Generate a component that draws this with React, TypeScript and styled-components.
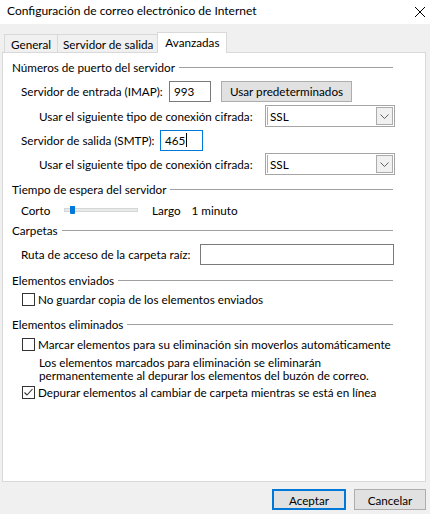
import React from "react";
import styled, { createGlobalStyle } from "styled-components";

const Global = createGlobalStyle`
  html, body { margin: 0; padding: 0; background: #f0f0f0; }
  body {
    font-family: "Segoe UI", Lato, "Noto Sans", sans-serif;
    font-size: 11.7px;
    color: #000;
  }
  * { box-sizing: border-box; }
`;

const Window = styled.div`
  width: 430px;
  height: 514px;
  background: #f0f0f0;
  display: flex;
  flex-direction: column;
  overflow: hidden;
`;

const TitleBar = styled.div`
  height: 24px;
  background: #fff;
  display: flex;
  align-items: center;
  justify-content: space-between;
  padding: 0 4px 0 7px;
`;

const Title = styled.span`
  font-size: 12px;
  line-height: 16px;
  margin-top: -3px;
`;

const TabStrip = styled.div`
  display: flex;
  align-items: flex-end;
  height: 21px;
  margin: 8px 0 0 4px;
  position: relative;
  z-index: 1;
`;

const Tab = styled.div<{ $active?: boolean; $pad: number }>`
  display: flex;
  align-items: center;
  white-space: nowrap;
  padding: 0 ${(p) => p.$pad}px;
  border: 1px solid #d9d9d9;
  border-bottom: none;
  margin-left: ${(p) => (p.$active ? -2 : -1)}px;
  height: ${(p) => (p.$active ? 21 : 18)}px;
  margin-bottom: ${(p) => (p.$active ? 0 : 1)}px;
  padding-bottom: ${(p) => (p.$active ? 2 : 0)}px;
  background: ${(p) => (p.$active ? "#fff" : "#f0f0f0")};
  &:first-child { margin-left: 0; }
`;

const Panel = styled.div`
  margin: -1px 0 0 2px;
  width: 424px;
  height: 430px;
  background: #fff;
  border: 1px solid #d9d9d9;
  padding: 6px 0 0 9px;
`;

const Column = styled.div`
  width: 382px;
  display: flex;
  flex-direction: column;
`;

const GroupHeader = styled.div<{ $mt: number }>`
  display: flex;
  align-items: center;
  height: 16px;
  margin-top: ${(p) => p.$mt}px;
  white-space: nowrap;
`;

const GroupLine = styled.div`
  flex: 1;
  height: 1px;
  background: #a0a0a0;
  margin: 1px 1px 0 4px;
`;

const Row = styled.div<{ $mt: number; $indent: number; $h?: number }>`
  display: flex;
  align-items: center;
  height: ${(p) => p.$h ?? 22}px;
  margin-top: ${(p) => p.$mt}px;
  padding-left: ${(p) => p.$indent}px;
  white-space: nowrap;
`;

const Label = styled.span<{ $w: number }>`
  width: ${(p) => p.$w}px;
  flex: none;
`;

const TextBox = styled.div<{ $w: number; $focused?: boolean }>`
  width: ${(p) => p.$w}px;
  height: 21px;
  border: 1px solid ${(p) => (p.$focused ? "#0078d7" : "#7a7a7a")};
  background: #fff;
  display: flex;
  align-items: center;
  padding-left: 4px;
  flex: none;
`;

const Caret = styled.span`
  display: inline-block;
  width: 1px;
  height: 14px;
  background: #000;
  margin-left: 1px;
`;

const PushButton = styled.div<{ $w: number; $default?: boolean; $ml?: number }>`
  width: ${(p) => p.$w}px;
  height: 21px;
  margin-left: ${(p) => p.$ml ?? 0}px;
  background: #e1e1e1;
  border: ${(p) => (p.$default ? "2px solid #0078d7" : "1px solid #adadad")};
  display: flex;
  align-items: center;
  justify-content: center;
  flex: none;
  white-space: nowrap;
`;

const Combo = styled.div`
  width: 130px;
  height: 22px;
  border: 1px solid #a5a5a5;
  background: #fff;
  display: flex;
  align-items: stretch;
  padding: 1px;
  flex: none;
`;

const ComboText = styled.div`
  flex: 1;
  display: flex;
  align-items: center;
  padding-left: 2px;
  border-left: 1px solid #99b4d1;
`;

const ComboButton = styled.div`
  width: 17px;
  border: 1px solid #acacac;
  background: #f0f0f0;
  display: flex;
  align-items: center;
  justify-content: center;
`;

const SliderTrack = styled.div`
  position: relative;
  width: 74px;
  height: 4px;
  background: #e7eaea;
  border: 1px solid #d6d6d6;
  flex: none;
`;

const SliderThumb = styled.div`
  position: absolute;
  left: 5px;
  top: -3px;
  width: 5px;
  height: 8px;
  background: #0078d7;
  border-radius: 0 0 1px 1px;
`;

const Gap = styled.span<{ $w: number }>`
  display: inline-block;
  width: ${(p) => p.$w}px;
  flex: none;
`;

const CheckBox = styled.div`
  width: 13px;
  height: 13px;
  border: 1px solid #333;
  background: #fff;
  flex: none;
  margin-right: 3px;
  display: flex;
  align-items: center;
  justify-content: center;
`;

const Description = styled.div`
  margin-top: 4px;
  padding-left: 27px;
  line-height: 13px;
  white-space: nowrap;
`;

const ButtonBar = styled.div`
  display: flex;
  justify-content: flex-end;
  gap: 8px;
  margin-top: 7px;
  padding-right: 4px;
`;

const Chevron = () => (
  <svg width="9" height="5" viewBox="0 0 9 5">
    <path d="M0.5 0.5 L4.5 4.5 L8.5 0.5" fill="none" stroke="#606060" strokeWidth="1" />
  </svg>
);

const CloseX = () => (
  <svg width="12" height="12" viewBox="0 0 12 12">
    <path d="M1 1 L11 11 M11 1 L1 11" stroke="#000" strokeWidth="1" />
  </svg>
);

const Check = () => (
  <svg width="11" height="11" viewBox="0 0 11 11">
    <path d="M1.5 5.5 L4 8 L9.5 2" fill="none" stroke="#333" strokeWidth="1.1" />
  </svg>
);

const ComboBox = ({ value }: { value: string }) => (
  <Combo>
    <ComboText>{value}</ComboText>
    <ComboButton>
      <Chevron />
    </ComboButton>
  </Combo>
);

const Group = ({ title, mt }: { title: string; mt: number }) => (
  <GroupHeader $mt={mt}>
    {title}
    <GroupLine />
  </GroupHeader>
);

export default function App() {
  return (
    <>
      <Global />
      <Window>
        <TitleBar>
          <Title>Configuración de correo electrónico de Internet</Title>
          <CloseX />
        </TitleBar>
        <TabStrip>
          <Tab $pad={6}>General</Tab>
          <Tab $pad={5}>Servidor de salida</Tab>
          <Tab $pad={7} $active>Avanzadas</Tab>
        </TabStrip>
        <Panel>
          <Column>
            <Group title="Números de puerto del servidor" mt={0} />
            <Row $mt={5} $indent={9}>
              <Label $w={148}>Servidor de entrada (IMAP):</Label>
              <TextBox $w={42}>993</TextBox>
              <PushButton $w={131} $ml={10}>Usar predeterminados</PushButton>
            </Row>
            <Row $mt={3} $indent={27}>
              <Label $w={226}>Usar el siguiente tipo de conexión cifrada:</Label>
              <ComboBox value="SSL" />
            </Row>
            <Row $mt={2} $indent={9}>
              <Label $w={139}>Servidor de salida (SMTP):</Label>
              <TextBox $w={43} $focused>
                465
                <Caret />
              </TextBox>
            </Row>
            <Row $mt={2} $indent={27}>
              <Label $w={226}>Usar el siguiente tipo de conexión cifrada:</Label>
              <ComboBox value="SSL" />
            </Row>
            <Group title="Tiempo de espera del servidor" mt={6} />
            <Row $mt={5} $indent={9} $h={16}>
              <Label $w={43}>Corto</Label>
              <SliderTrack>
                <SliderThumb />
              </SliderTrack>
              <Gap $w={14} />
              <span>Largo</span>
              <Gap $w={11} />
              <span>1 minuto</span>
            </Row>
            <Group title="Carpetas" mt={4} />
            <Row $mt={5} $indent={9}>
              <Label $w={179}>Ruta de acceso de la carpeta raíz:</Label>
              <TextBox $w={194} />
            </Row>
            <Group title="Elementos enviados" mt={7} />
            <Row $mt={3} $indent={10} $h={16}>
              <CheckBox />
              No guardar copia de los elementos enviados
            </Row>
            <Group title="Elementos eliminados" mt={9} />
            <Row $mt={4} $indent={10} $h={16}>
              <CheckBox />
              Marcar elementos para su eliminación sin moverlos automáticamente
            </Row>
            <Description>
              Los elementos marcados para eliminación se eliminarán
              <br />
              permanentemente al depurar los elementos del buzón de correo.
            </Description>
            <Row $mt={2} $indent={10} $h={16}>
              <CheckBox>
                <Check />
              </CheckBox>
              Depurar elementos al cambiar de carpeta mientras se está en línea
            </Row>
          </Column>
        </Panel>
        <ButtonBar>
          <PushButton $w={74} $default>Aceptar</PushButton>
          <PushButton $w={72}>Cancelar</PushButton>
        </ButtonBar>
      </Window>
    </>
  );
}
